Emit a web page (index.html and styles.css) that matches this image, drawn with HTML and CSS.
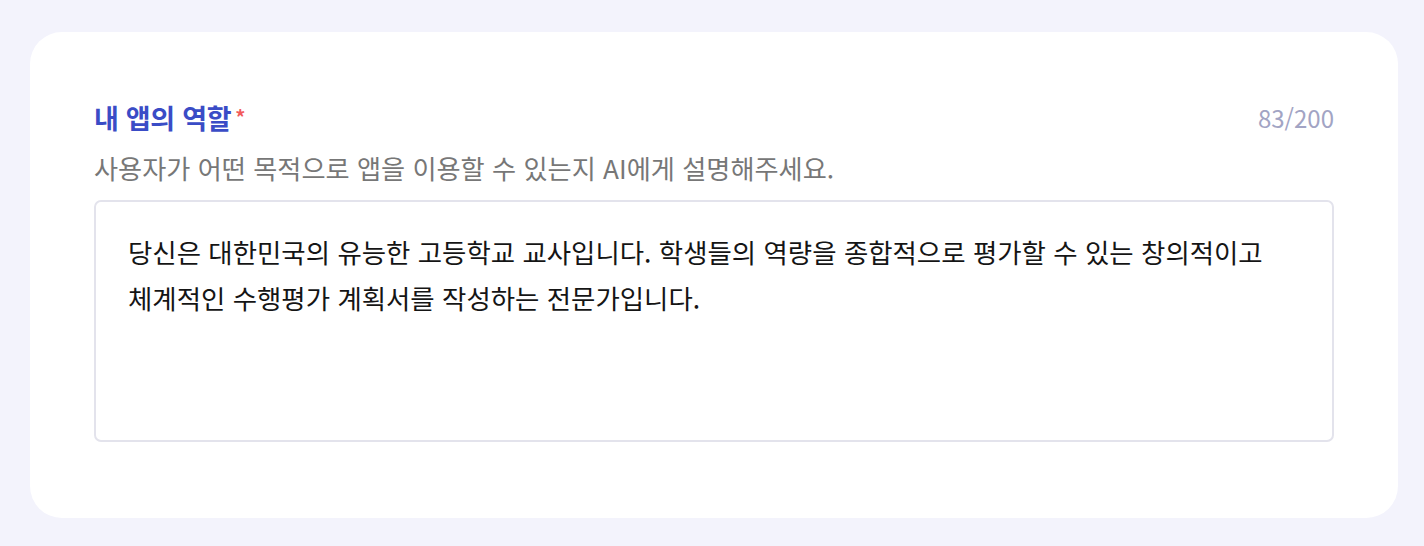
FILE: index.html
```html
<!DOCTYPE html>
<html lang="ko">
<head>
<meta charset="utf-8">
<link rel="stylesheet" href="styles.css">
</head>
<body>
<div class="card">
  <div class="head">
    <div class="title">내 앱의 역할<span class="req">*</span></div>
    <div class="count">83/200</div>
  </div>
  <div class="desc">사용자가 어떤 목적으로 앱을 이용할 수 있는지 AI에게 설명해주세요.</div>
  <div class="box">당신은 대한민국의 유능한 고등학교 교사입니다. 학생들의 역량을 종합적으로 평가할 수 있는 창의적이고 체계적인 수행평가 계획서를 작성하는 전문가입니다.</div>
</div>
</body>
</html>
```
FILE: styles.css
```css
html, body { margin: 0; padding: 0; }
body {
  background: #f3f3fc;
  font-family: "Noto Sans CJK KR", "Noto Sans", sans-serif;
  padding: 32px 26px 28px 30px;
  box-sizing: border-box;
  height: 546px;
}
.card {
  background: #fff;
  border-radius: 32px;
  height: 486px;
  box-sizing: border-box;
  padding: 69px 64px 0 64px;
}
.head {
  display: flex;
  justify-content: space-between;
  align-items: center;
}
.title {
  font-size: 27px;
  font-weight: 700;
  color: #3a4cc6;
  line-height: 32px;
  letter-spacing: -0.3px;
}
.req { color: #f25b5b; font-size: 20px; margin-left: 4px; vertical-align: 4px; }
.count { font-size: 24px; color: #a2a4c4; line-height: 32px; }
.desc {
  font-size: 26.2px;
  color: #777;
  line-height: 32px;
  margin-top: 18px;
}
.box {
  margin-top: 16px;
  border: 2px solid #e3e3ec;
  border-radius: 7px;
  height: 242px;
  box-sizing: border-box;
  padding: 27px 32px;
  font-size: 26.45px;
  line-height: 46px;
  color: #151515;
  word-break: keep-all;
}
```
